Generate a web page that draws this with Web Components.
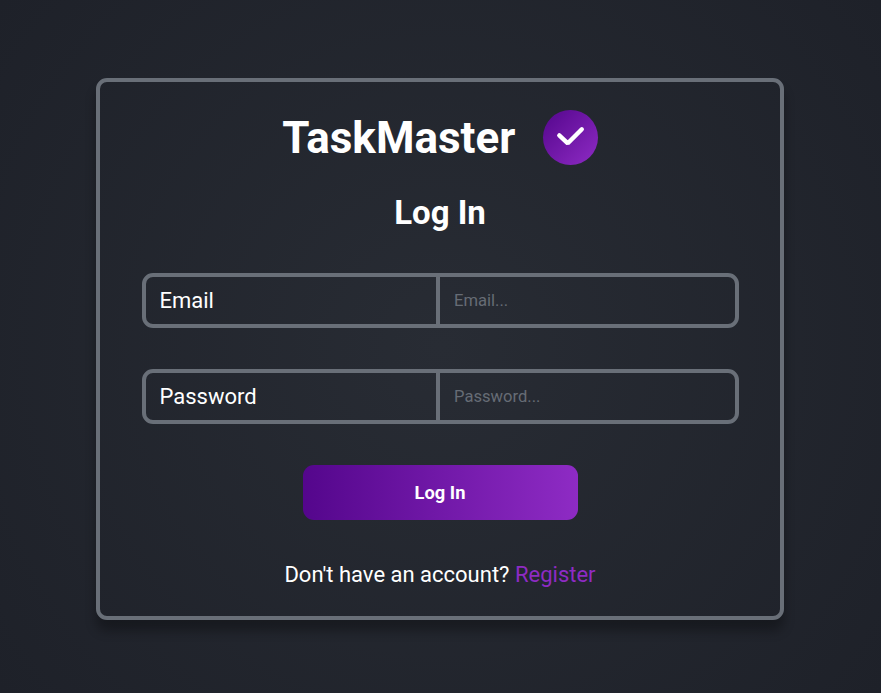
<!DOCTYPE html>
<html lang="en">
<head>
<meta charset="utf-8">
<title>TaskMaster</title>
<style>
html { font-size: 22px; height: 100%; }
body { margin: 0; height: 100%; font-family: Roboto, "Liberation Sans", sans-serif; color: #fff;
  --line: #696f78; --violet: #54068c; --orchid: #8e2bc4; }
</style>
</head>
<body>
<login-page></login-page>
<script>
const define = (name, html) => {
  const template = document.createElement('template');
  template.innerHTML = html;
  customElements.define(name, class extends HTMLElement {
    constructor() {
      super();
      this.attachShadow({ mode: 'open' }).append(template.content.cloneNode(true));
    }
    connectedCallback() {
      const input = this.shadowRoot.querySelector('input');
      if (input) {
        input.type = this.getAttribute('type') || 'text';
        input.placeholder = this.getAttribute('placeholder') || '';
      }
    }
  });
};

define('brand-title', `
<style>
:host { display: flex; align-items: center; justify-content: center; gap: 27.5px; height: 55px; }
h1 { margin: 0; padding-top: 1px; font-size: 44px; line-height: 53px; font-weight: 700; }
.badge { width: 55px; height: 55px; border-radius: 50%; background: linear-gradient(135deg, var(--violet), var(--orchid)); }
svg { display: block; width: 55px; height: 55px; }
</style>
<h1><slot></slot></h1>
<div class="badge"><svg viewBox="0 0 55 55" fill="none" stroke="#fff" stroke-width="4.4" stroke-linecap="round" stroke-linejoin="bevel"><path d="M16.3 25.4 24.8 33.3 38.8 19.3"/></svg></div>`);

define('form-field', `
<style>
:host { display: grid; grid-template-columns: 290px 1fr; box-sizing: border-box; height: 55px; width: 597px; border: 4px solid var(--line); border-radius: 11px; }
label { padding-left: 14px; line-height: 47px; font-size: 22px; }
input { box-sizing: border-box; width: 100%; height: 47px; margin: 0; padding: 0 14px; border: 0; border-left: 4px solid var(--line); outline: 0; background: transparent; color: #fff; font: 16.6px Roboto, "Liberation Sans", sans-serif; text-indent: .5px; }
input::placeholder { color: #666c75; opacity: 1; }
</style>
<label for="field"><slot></slot></label><input id="field">`);

define('action-button', `
<style>
:host { display: block; width: 275px; height: 55px; }
button { display: block; width: 100%; height: 100%; border: 0; border-radius: 11px; padding: 0; color: #fff; font: 700 18.3px Roboto, "Liberation Sans", sans-serif; background: linear-gradient(90deg, var(--violet), var(--orchid)); }
</style>
<button><slot></slot></button>`);

define('login-card', `
<style>
:host { display: flex; flex-direction: column; align-items: center; box-sizing: border-box; width: 688px; height: 542px; padding-top: 28px; border: 4px solid var(--line); border-radius: 11px; box-shadow: 0 11px 11px rgba(0,0,0,.3); }
h2 { margin: 28px 0 41px; font-size: 33px; line-height: 39px; font-weight: 700; }
form-field { margin-bottom: 41px; }
p { margin: 42px 0 0; font-size: 22px; line-height: 26px; }
a { color: var(--orchid); text-decoration: none; }
</style>
<brand-title>TaskMaster</brand-title>
<h2>Log In</h2>
<form-field placeholder="Email...">Email</form-field>
<form-field type="password" placeholder="Password...">Password</form-field>
<action-button>Log In</action-button>
<p>Don't have an account? <a href="#">Register</a></p>`);

define('login-page', `
<style>
:host { display: flex; justify-content: center; align-items: flex-start; box-sizing: border-box; height: 100%; padding: 78px 1px 0 0; background: radial-gradient(circle, #282c34, #1e2129); }
</style>
<login-card></login-card>`);
</script>
</body>
</html>
